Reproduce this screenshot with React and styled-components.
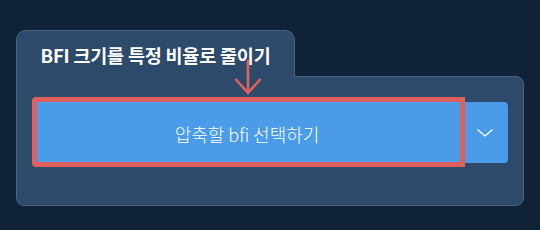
import React from "react";
import styled, { createGlobalStyle } from "styled-components";

const Global = createGlobalStyle`
  html, body { margin: 0; padding: 0; background: #0f2238; }
  body { font-family: "Noto Sans CJK KR", "Noto Sans", sans-serif; }
`;

const Page = styled.div`
  width: 540px;
  height: 230px;
  box-sizing: border-box;
  padding: 30px 16px 0 16px;
  background: #0f2238;
  position: relative;
`;

const Card = styled.div`
  display: flex;
  flex-direction: column;
  width: 508px;
`;

const Tab = styled.div`
  position: relative;
  z-index: 1;
  width: 279px;
  height: 47px;
  box-sizing: border-box;
  margin-bottom: -1px;
  background: #2d4a6a;
  border: 1px solid #4a6586;
  border-bottom: none;
  border-radius: 10px 10px 0 0;
  display: flex;
  align-items: center;
  justify-content: center;
  padding-top: 2px;
  color: #ffffff;
  font-weight: 700;
  font-size: 18.5px;
  letter-spacing: -0.2px;
`;

const Body = styled.div`
  background: #2d4a6a;
  border: 1px solid #4a6586;
  border-radius: 0 8px 8px 8px;
  box-sizing: border-box;
  height: 130px;
  padding: 25px 15px 0 16px;
`;

const Split = styled.div`
  display: flex;
  height: 61px;
  background: #4a9be8;
  border-radius: 4px;
`;

const MainButton = styled.div`
  flex: 1;
  display: flex;
  align-items: center;
  justify-content: center;
  color: #ffffff;
  font-size: 18px;
  font-weight: 300;
  padding-top: 2px;
`;

const DropButton = styled.div`
  width: 47px;
  display: flex;
  align-items: center;
  justify-content: center;
`;

const Highlight = styled.div`
  position: absolute;
  left: 32px;
  top: 97px;
  width: 433px;
  height: 70px;
  box-sizing: border-box;
  border: 5px solid #e0615c;
  border-radius: 4px 0 0 4px;
  pointer-events: none;
`;

const Arrow = styled.svg`
  position: absolute;
  left: 232px;
  top: 58px;
  z-index: 2;
`;

export default function App() {
  return (
    <>
      <Global />
      <Page>
        <Card>
          <Tab>BFI 크기를 특정 비율로 줄이기</Tab>
          <Body>
            <Split>
              <MainButton>압축할 bfi 선택하기</MainButton>
              <DropButton>
                <svg width="18" height="10" viewBox="0 0 18 10">
                  <path d="M1.5 1.5 L9 8 L16.5 1.5" fill="none" stroke="#ffffff" strokeWidth="1.2" />
                </svg>
              </DropButton>
            </Split>
          </Body>
        </Card>
        <Highlight />
        <Arrow width="32" height="40" viewBox="0 0 32 40">
          <path d="M16 2 L16 35" stroke="#e0615c" strokeWidth="2.6" fill="none" />
          <path d="M3.5 21 L16 35 L28.5 21" stroke="#e0615c" strokeWidth="2.6" fill="none" />
        </Arrow>
      </Page>
    </>
  );
}
